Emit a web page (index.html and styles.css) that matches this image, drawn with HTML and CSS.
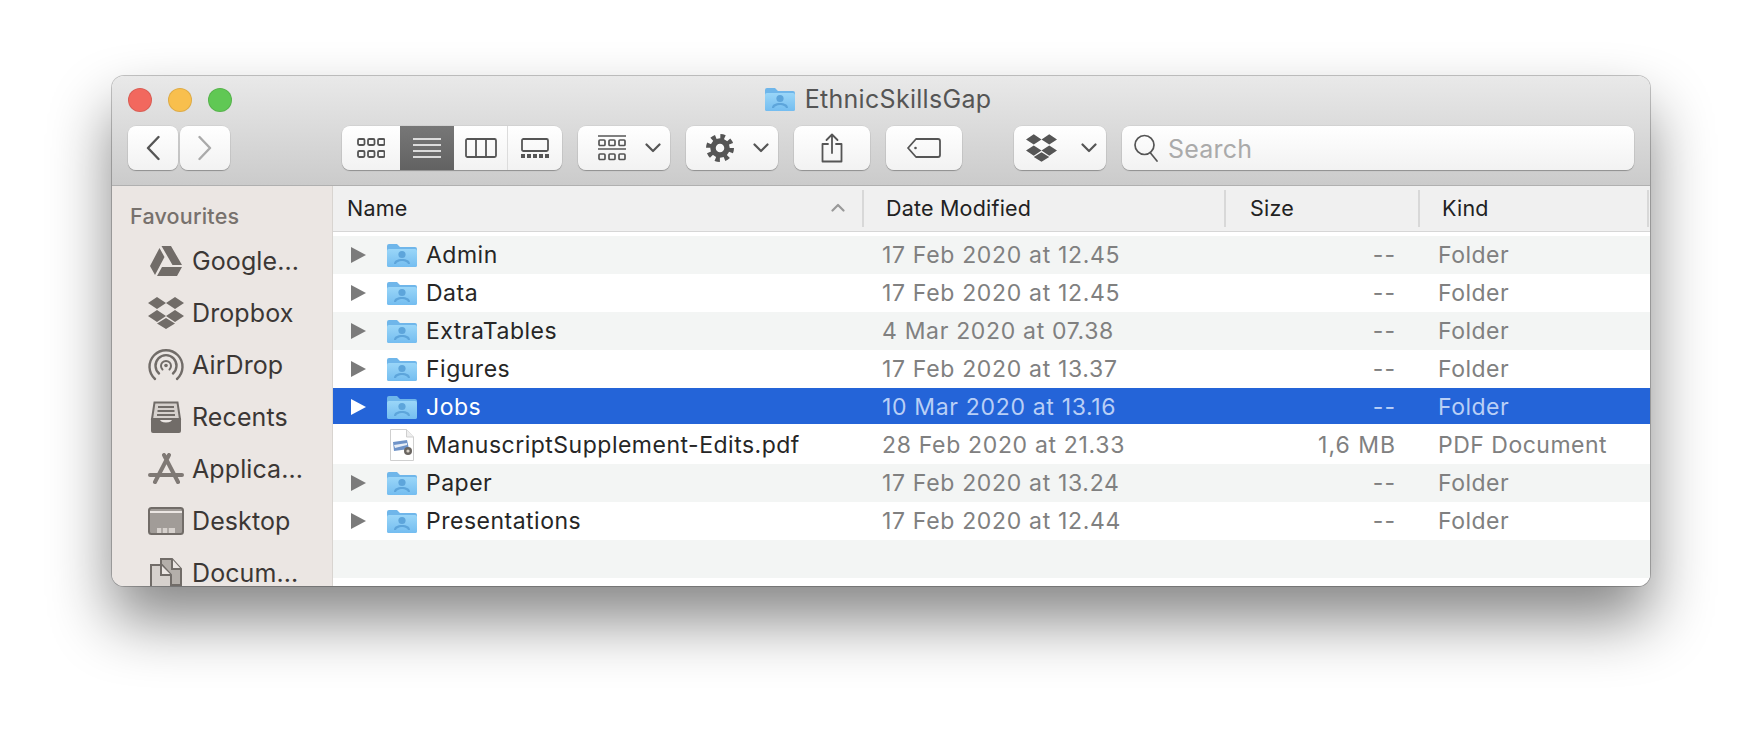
FILE: index.html
```html
<!DOCTYPE html>
<html>

<head>
    <title>EthnicSkillsGap</title>
    <link rel="stylesheet" href="styles.css">
</head>

<body>
    <svg class="defs" width="0" height="0">
        <defs>
            <linearGradient id="folderFill" x1="0" y1="0" x2="0" y2="1">
                <stop offset="0" stop-color="#9ad6f8" />
                <stop offset="1" stop-color="#74bdf0" />
            </linearGradient>
            <symbol id="folder" viewBox="0 0 30 24">
                <path d="M0 3a2 2 0 0 1 2-2h8l3 3h15a2 2 0 0 1 2 2v16a2 2 0 0 1-2 2H2a2 2 0 0 1-2-2z" fill="#6fb6ea" />
                <path d="M0 8a2 2 0 0 1 2-2h26a2 2 0 0 1 2 2v14a2 2 0 0 1-2 2H2a2 2 0 0 1-2-2z" fill="url(#folderFill)" />
                <circle cx="15" cy="11.5" r="3.6" fill="#5da5db" />
                <path d="M7 21c0-3.600 3.500-5 8-5s8 1.400 8 5h-2c-.5-1.600-3-3-6-3s-5.500 1.400-6 3z" fill="#5da5db" />
            </symbol>
            <symbol id="dropbox" viewBox="0 0 36 32">
                <path d="M9 0l9 6-9 6-9-6zM27 0l9 6-9 6-9-6zM9 13l9 6-9 6-9-6zM27 13l9 6-9 6-9-6zM18 21l9 5.500-9 5.500-9-5.500z" />
            </symbol>
            <symbol id="chevron" viewBox="0 0 16 10">
                <path d="M1.500 1.500L8 8l6.500-6.500" fill="none" stroke="#555" stroke-width="2.200" stroke-linecap="round" stroke-linejoin="round" />
            </symbol>
        </defs>
    </svg>

    <div class="window">
        <header class="titlebar">
            <div class="title-row">
                <div class="lights">
                    <span class="light light-red"></span>
                    <span class="light light-yellow"></span>
                    <span class="light light-green"></span>
                </div>
                <div class="title">
                    <svg class="title-folder"><use href="#folder" /></svg>
                    <span>EthnicSkillsGap</span>
                </div>
            </div>
            <div class="toolbar">
                <div class="nav">
                    <button class="btn nav-btn">
                        <svg width="14" height="26" viewBox="0 0 14 26"><path d="M12.500 2L2 13l10.500 11" fill="none" stroke="#555" stroke-width="2.400" stroke-linecap="round" stroke-linejoin="round" /></svg>
                    </button>
                    <button class="btn nav-btn">
                        <svg width="14" height="26" viewBox="0 0 14 26"><path d="M1.500 2L12 13 1.500 24" fill="none" stroke="#aaa" stroke-width="2.400" stroke-linecap="round" stroke-linejoin="round" /></svg>
                    </button>
                </div>
                <div class="views btn">
                    <span class="view view-first">
                        <svg width="28" height="20" viewBox="0 0 28 20" fill="none" stroke="#555" stroke-width="1.800">
                            <rect x="1" y="1" width="6.500" height="6" rx="1.200" /><rect x="11" y="1" width="6.500" height="6" rx="1.200" /><rect x="21" y="1" width="6.500" height="6" rx="1.200" />
                            <rect x="1" y="13" width="6.500" height="6" rx="1.200" /><rect x="11" y="13" width="6.500" height="6" rx="1.200" /><rect x="21" y="13" width="6.500" height="6" rx="1.200" />
                        </svg>
                    </span>
                    <span class="view view-on">
                        <svg width="28" height="20" viewBox="0 0 28 20" stroke="#fff" stroke-width="1.500"><path d="M0 1h28M0 7h28M0 13h28M0 19h28" /></svg>
                    </span>
                    <span class="view">
                        <svg width="32" height="20" viewBox="0 0 32 20" fill="none" stroke="#555" stroke-width="1.800"><rect x="1" y="1" width="30" height="18" rx="1.500" /><path d="M11 1v18M21 1v18" /></svg>
                    </span>
                    <span class="view view-last">
                        <svg width="28" height="20" viewBox="0 0 28 20">
                            <rect x="1" y="1" width="26" height="12" rx="1.500" fill="none" stroke="#555" stroke-width="1.800" />
                            <path d="M0 16h4v4H0zM6 16h4v4H6zM12 16h4v4h-4zM18 16h4v4h-4zM24 16h4v4h-4z" fill="#555" />
                        </svg>
                    </span>
                </div>
                <button class="btn menu-btn">
                    <svg width="28" height="26" viewBox="0 0 28 26" fill="none" stroke="#555" stroke-width="1.700">
                        <path d="M0 1h28M0 14h28" />
                        <rect x="1" y="5" width="6" height="5.500" rx="1" /><rect x="11" y="5" width="6" height="5.500" rx="1" /><rect x="21" y="5" width="6" height="5.500" rx="1" />
                        <rect x="1" y="19" width="6" height="5.500" rx="1" /><rect x="11" y="19" width="6" height="5.500" rx="1" /><rect x="21" y="19" width="6" height="5.500" rx="1" />
                    </svg>
                    <svg class="chev"><use href="#chevron" /></svg>
                </button>
                <button class="btn menu-btn">
                    <svg width="28" height="28" viewBox="0 0 28 28">
                        <circle cx="14" cy="14" r="11.500" fill="none" stroke="#555" stroke-width="5" stroke-dasharray="4.500 4.530" />
                        <circle cx="14" cy="14" r="7" fill="none" stroke="#555" stroke-width="5.500" />
                    </svg>
                    <svg class="chev"><use href="#chevron" /></svg>
                </button>
                <button class="btn icon-btn">
                    <svg width="22" height="30" viewBox="0 0 22 30" fill="none" stroke="#555" stroke-width="1.800" stroke-linecap="round" stroke-linejoin="round">
                        <path d="M7 11H1.500v17.500h19V11H15" />
                        <path d="M11 20V1.500M5.500 7L11 1.500 16.500 7" />
                    </svg>
                </button>
                <button class="btn icon-btn">
                    <svg width="34" height="20" viewBox="0 0 34 20" fill="none" stroke="#555" stroke-width="1.800" stroke-linejoin="round">
                        <path d="M9 1h22a2 2 0 0 1 2 2v14a2 2 0 0 1-2 2H9l-8-9z" />
                        <circle cx="8.500" cy="10" r="1.300" fill="#555" stroke="none" />
                    </svg>
                </button>
                <button class="btn menu-btn dropbox-btn">
                    <svg class="dropbox-icon"><use href="#dropbox" /></svg>
                    <svg class="chev"><use href="#chevron" /></svg>
                </button>
                <div class="btn search">
                    <svg width="26" height="30" viewBox="0 0 26 30" fill="none" stroke="#555" stroke-width="1.700" stroke-linecap="round">
                        <circle cx="11.500" cy="12" r="9.500" />
                        <path d="M17.500 20L24 28" />
                    </svg>
                    <span class="search-text">Search</span>
                </div>
            </div>
        </header>

        <div class="main">
            <aside class="sidebar">
                <h2 class="side-title">Favourites</h2>
                <ul class="side-list">
                    <li class="side-item">
                        <span class="side-icon">
                            <svg width="32" height="30" viewBox="0 0 32 30" fill="#716c68"><path d="M11.500 0h9.500l11 19H22.500zM9.500 2l5 9L5 29 0 20zM12 21h20l-5 9H7z" /></svg>
                        </span>
                        Google...
                    </li>
                    <li class="side-item">
                        <span class="side-icon"><svg class="side-dropbox"><use href="#dropbox" /></svg></span>
                        Dropbox
                    </li>
                    <li class="side-item">
                        <span class="side-icon">
                            <svg width="36" height="34" viewBox="0 0 36 34" fill="none" stroke="#716c68" stroke-width="2.400" stroke-linecap="round">
                                <path d="M7 31A16.500 16.500 0 1 1 29 31" />
                                <path d="M11 25.500A10.500 10.500 0 1 1 25 25.500" />
                                <path d="M14.500 21.500A5 5 0 1 1 21.500 21.500" stroke-width="2" />
                                <circle cx="18" cy="17.500" r="1.800" fill="#716c68" stroke="none" />
                            </svg>
                        </span>
                        AirDrop
                    </li>
                    <li class="side-item">
                        <span class="side-icon">
                            <svg width="32" height="32" viewBox="0 0 32 32">
                                <path d="M4.500 1.500h23L30 18H2z" fill="#d6d1cd" stroke="#716c68" stroke-width="2" />
                                <path d="M8 6h16M7.500 10h17M7 14h18" stroke="#716c68" stroke-width="1.800" />
                                <path d="M1 17h8c1 3 3 4.500 7 4.500s6-1.500 7-4.500h8v13a2 2 0 0 1-2 2H3a2 2 0 0 1-2-2z" fill="#716c68" />
                            </svg>
                        </span>
                        Recents
                    </li>
                    <li class="side-item">
                        <span class="side-icon">
                            <svg width="36" height="32" viewBox="0 0 36 32" fill="none" stroke="#7f7975" stroke-width="4" stroke-linecap="round">
                                <path d="M16 2l14 27M21 2L7 29M2 22h32" />
                            </svg>
                        </span>
                        Applica...
                    </li>
                    <li class="side-item">
                        <span class="side-icon">
                            <svg width="36" height="28" viewBox="0 0 36 28">
                                <rect x="1" y="1" width="34" height="26" rx="2.500" fill="#a19c98" stroke="#716c68" stroke-width="2" />
                                <path d="M2 5h32" stroke="#ebe6e3" stroke-width="2" />
                                <path d="M9 21h18v5H9z" fill="#d6d1cd" />
                                <path d="M14 21v5M20 21v5" stroke="#a19c98" stroke-width="1.500" />
                            </svg>
                        </span>
                        Desktop
                    </li>
                    <li class="side-item">
                        <span class="side-icon">
                            <svg width="32" height="36" viewBox="0 0 32 36" class="docs-icon">
                                <path d="M11 1h11l9 10v16H11z" fill="#b4afaa" stroke="#716c68" stroke-width="2" />
                                <path d="M22 1v10h9" fill="#ebe6e3" stroke="#716c68" stroke-width="2" />
                                <path d="M1 7h11l9 10v19H1z" fill="#d6d1cd" stroke="#716c68" stroke-width="2" />
                                <path d="M11 7v10h10" fill="#ebe6e3" stroke="#716c68" stroke-width="2" />
                            </svg>
                        </span>
                        Docum...
                    </li>
                </ul>
            </aside>

            <section class="files">
                <div class="list-head">
                    <div class="head-cell head-name">
                        <span>Name</span>
                        <svg class="sort" width="14" height="9" viewBox="0 0 14 9"><path d="M1.500 7.500L7 2l5.500 5.500" fill="none" stroke="#999" stroke-width="2.200" stroke-linecap="round" stroke-linejoin="round" /></svg>
                    </div>
                    <div class="head-cell">Date Modified</div>
                    <div class="head-cell head-size">Size</div>
                    <div class="head-cell">Kind</div>
                    <div class="head-cell"></div>
                </div>

                <div class="rows">
                    <div class="row row-alt">
                        <div class="cell-name"><i class="arrow"></i><svg class="folder"><use href="#folder" /></svg><span>Admin</span></div>
                        <div class="cell-date">17 Feb 2020 at 12.45</div>
                        <div class="cell-size">--</div>
                        <div class="cell-kind">Folder</div>
                    </div>
                    <div class="row">
                        <div class="cell-name"><i class="arrow"></i><svg class="folder"><use href="#folder" /></svg><span>Data</span></div>
                        <div class="cell-date">17 Feb 2020 at 12.45</div>
                        <div class="cell-size">--</div>
                        <div class="cell-kind">Folder</div>
                    </div>
                    <div class="row row-alt">
                        <div class="cell-name"><i class="arrow"></i><svg class="folder"><use href="#folder" /></svg><span>ExtraTables</span></div>
                        <div class="cell-date">4 Mar 2020 at 07.38</div>
                        <div class="cell-size">--</div>
                        <div class="cell-kind">Folder</div>
                    </div>
                    <div class="row">
                        <div class="cell-name"><i class="arrow"></i><svg class="folder"><use href="#folder" /></svg><span>Figures</span></div>
                        <div class="cell-date">17 Feb 2020 at 13.37</div>
                        <div class="cell-size">--</div>
                        <div class="cell-kind">Folder</div>
                    </div>
                    <div class="row row-selected">
                        <div class="cell-name"><i class="arrow"></i><svg class="folder"><use href="#folder" /></svg><span>Jobs</span></div>
                        <div class="cell-date">10 Mar 2020 at 13.16</div>
                        <div class="cell-size">--</div>
                        <div class="cell-kind">Folder</div>
                    </div>
                    <div class="row row-tall">
                        <div class="cell-name">
                            <i class="arrow arrow-none"></i>
                            <svg class="pdf" width="30" height="32" viewBox="0 0 30 32">
                                <path d="M3.500.5h16l7 7.500v23.500h-23z" fill="#fff" stroke="#cfcfcf" />
                                <path d="M19.500.5V8h7" fill="#eee" stroke="#cfcfcf" />
                                <path d="M6 13l14-2 2 9-15 2z" fill="#6f93c8" />
                                <path d="M7 16l13-2v2L8 19z" fill="#e8eef6" />
                                <circle cx="21" cy="22" r="4" fill="#6a6560" />
                                <circle cx="21" cy="22" r="1.600" fill="#d8d2c8" />
                            </svg>
                            <span>ManuscriptSupplement-Edits.pdf</span>
                        </div>
                        <div class="cell-date">28 Feb 2020 at 21.33</div>
                        <div class="cell-size">1,6 MB</div>
                        <div class="cell-kind">PDF Document</div>
                    </div>
                    <div class="row row-alt">
                        <div class="cell-name"><i class="arrow"></i><svg class="folder"><use href="#folder" /></svg><span>Paper</span></div>
                        <div class="cell-date">17 Feb 2020 at 13.24</div>
                        <div class="cell-size">--</div>
                        <div class="cell-kind">Folder</div>
                    </div>
                    <div class="row">
                        <div class="cell-name"><i class="arrow"></i><svg class="folder"><use href="#folder" /></svg><span>Presentations</span></div>
                        <div class="cell-date">17 Feb 2020 at 12.44</div>
                        <div class="cell-size">--</div>
                        <div class="cell-kind">Folder</div>
                    </div>
                    <div class="row row-alt"></div>
                </div>
            </section>
        </div>
    </div>
</body>

</html>
```

FILE: styles.css
```css
* {
    box-sizing: border-box;
}

html,
body {
    height: 100%;
}

body {
    margin: 0;
    padding: 76px 0 0 112px;
    background: #fff;
    overflow: hidden;
    font-family: Inter, "Liberation Sans", sans-serif;
    font-size: 23px;
    letter-spacing: .5px;
    color: #262626;
}

.defs {
    position: absolute;
}

button {
    font: inherit;
    padding: 0;
    border: 0;
}

.window {
    width: 1538px;
    height: 510px;
    border-radius: 12px;
    overflow: hidden;
    display: flex;
    flex-direction: column;
    box-shadow: 0 0 0 1px rgba(0, 0, 0, .22), 0 34px 62px rgba(0, 0, 0, .48);
}

/* title bar */

.titlebar {
    height: 110px;
    flex: none;
    background: linear-gradient(#e9e9e9, #cbcbcb);
    border-bottom: 1px solid #b0b0b0;
    padding: 10px 16px 0;
}

.title-row {
    display: grid;
    grid-template-columns: 1fr auto 1fr;
    height: 24px;
    align-items: center;
}

.lights {
    display: flex;
    gap: 16px;
}

.light {
    width: 24px;
    height: 24px;
    border-radius: 50%;
    border: 1px solid rgba(0, 0, 0, .1);
}

.light-red {
    background: #f2685e;
}

.light-yellow {
    background: #f8bf4d;
}

.light-green {
    background: #60c854;
}

.title {
    display: flex;
    align-items: center;
    gap: 10px;
    margin: -2px 0 0 -6px;
    color: #555;
    font-size: 25px;
    letter-spacing: .3px;
}

.title-folder {
    width: 30px;
    height: 24px;
}

.toolbar {
    display: flex;
    margin-top: 16px;
    height: 44px;
}

.btn {
    background: linear-gradient(#fff, #f2f2f2);
    border-radius: 8px;
    box-shadow: 0 1px 1px rgba(0, 0, 0, .28), 0 0 0 .5px rgba(0, 0, 0, .08);
    display: flex;
    align-items: center;
}

.nav {
    display: flex;
    gap: 2px;
    margin-right: 112px;
}

.nav-btn {
    width: 50px;
    justify-content: center;
}

.views {
    width: 220px;
    overflow: hidden;
    margin-right: 16px;
}

.view {
    height: 44px;
    display: flex;
    align-items: center;
    justify-content: center;
    width: 53px;
}

.view-first {
    width: 58px;
}

.view-on {
    width: 54px;
    background: linear-gradient(#777, #626262);
}

.view-last {
    width: 55px;
    border-left: 1px solid #dcdcdc;
}

.menu-btn {
    width: 92px;
    padding: 0 9px 0 20px;
    justify-content: space-between;
    margin-right: 16px;
}

.chev {
    width: 16px;
    height: 10px;
}

.icon-btn {
    width: 76px;
    justify-content: center;
    margin-right: 16px;
}

.dropbox-btn {
    margin-left: 36px;
    padding-left: 12px;
}

.dropbox-icon {
    width: 31px;
    height: 28px;
    fill: #555;
}

.search {
    width: 512px;
    padding-left: 11px;
    gap: 9px;
    color: #aaa;
    font-size: 25px;
    letter-spacing: .2px;
}

.search-text {
    padding-top: 2px;
}

/* sidebar */

.main {
    flex: 1;
    display: flex;
    min-height: 0;
}

.sidebar {
    width: 221px;
    flex: none;
    background: #ebe6e3;
    border-right: 1px solid #d8d4d0;
    overflow: hidden;
    padding-left: 18px;
}

.side-title {
    margin: 18px 0 0;
    font-size: 21.500px;
    line-height: 24px;
    font-weight: 500;
    letter-spacing: .2px;
    color: #77716d;
}

.side-list {
    list-style: none;
    margin: 7px 0 0;
    padding: 0 0 0 9px;
}

.side-item {
    display: flex;
    align-items: center;
    height: 52px;
    line-height: 26px;
    color: #3b3735;
    font-size: 25px;
    letter-spacing: .1px;
    white-space: nowrap;
}

.side-icon {
    width: 53px;
    flex: none;
    display: flex;
    justify-content: center;
    padding-left: 1px;
}

.side-dropbox {
    width: 36px;
    height: 32px;
    fill: #716c68;
}

.docs-icon {
    flex: none;
    margin-top: 6px;
}

/* file list */

.files {
    flex: 1;
    min-width: 0;
    background: #fff;
}

.list-head {
    display: grid;
    grid-template-columns: 529px 362px 194px 229px 3px;
    height: 46px;
    padding: 4px 0;
    background: #f0f0f0;
    border-bottom: 1px solid #d6d6d6;
    font-size: 21.500px;
    letter-spacing: .2px;
    color: #222;
}

.head-cell {
    display: flex;
    align-items: center;
    padding: 0 0 2px 22px;
    border-left: 2px solid #d8d8d8;
}

.head-name {
    padding: 0 17px 2px 14px;
    border-left: 0;
    justify-content: space-between;
}

.head-size {
    padding-left: 24px;
}

.rows {
    margin-top: 4px;
}

.row {
    display: grid;
    grid-template-columns: 529px 362px 194px 1fr;
    height: 38px;
    align-items: center;
    white-space: nowrap;
    color: #808080;
}

.row-alt {
    background: #f3f5f4;
}

.row-tall {
    height: 40px;
}

.row-selected {
    height: 36px;
    background: #2464d8;
    color: #b9cff6;
}

.row-tall,
.row-selected {
    padding-top: 2px;
}

.cell-name {
    display: flex;
    align-items: center;
    padding-left: 18px;
    color: #262626;
}

.row-selected .cell-name {
    color: #fff;
}

.arrow {
    width: 0;
    height: 0;
    flex: none;
    border-left: 15px solid #7b7b7b;
    border-top: 8.500px solid transparent;
    border-bottom: 8.500px solid transparent;
    margin-right: 21px;
}

.row-selected .arrow {
    border-left-color: #fff;
}

.arrow-none {
    visibility: hidden;
}

.folder {
    width: 30px;
    height: 24px;
    flex: none;
    margin-right: 9px;
}

.pdf {
    flex: none;
    margin-right: 9px;
}

.cell-date {
    padding-left: 20px;
    letter-spacing: .67px;
}

.cell-size {
    text-align: right;
    padding-right: 22px;
    letter-spacing: 1px;
}

.cell-kind {
    padding-left: 20px;
}
```
